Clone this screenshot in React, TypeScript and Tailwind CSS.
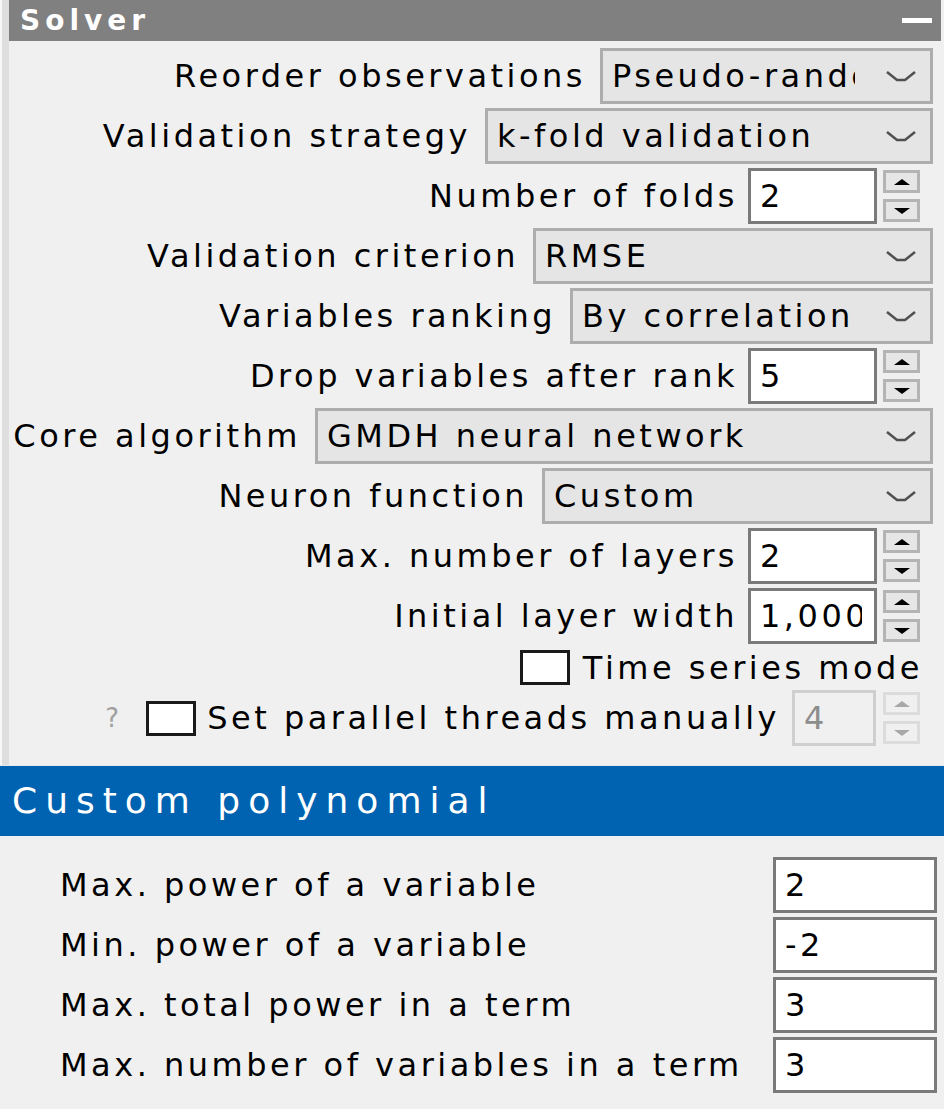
import React from "react";

const Chevron = () => (
  <svg width="30" height="12" viewBox="0 0 30 12">
    <polyline points="1,2 11,10 19,10 29,2" fill="none" stroke="#505050" strokeWidth="2.5" />
  </svg>
);

const Arrow = ({ up, color }: { up: boolean; color: string }) => (
  <svg width="16" height="8" viewBox="0 0 16 8">
    {up ? <polygon points="0,7 8,1 16,7" fill={color} /> : <polygon points="0,1 8,7 16,1" fill={color} />}
  </svg>
);

const Combo = ({ value, w }: { value: string; w: string }) => (
  <div className={`flex h-[56px] items-center border-[3px] border-[#adadad] bg-[#e5e5e5] ${w}`}>
    <span className="flex-1 overflow-hidden whitespace-nowrap pl-[9px]">{value}</span>
    <span className="flex w-[75px] shrink-0 justify-end pr-[14px]">
      <Chevron />
    </span>
  </div>
);

const Spin = ({ disabled }: { disabled?: boolean }) => {
  const box = disabled
    ? "flex h-[23px] w-[37px] items-center justify-center border-[3px] border-[#dcdcdc] bg-[#f0f0f0]"
    : "flex h-[23px] w-[37px] items-center justify-center border-[3px] border-[#b4b4b4] bg-[#e6e6e6]";
  const c = disabled ? "#a8a8a8" : "#000";
  return (
    <div className="flex h-[56px] flex-col justify-between py-[2px]">
      <div className={box}>
        <Arrow up color={c} />
      </div>
      <div className={box}>
        <Arrow up={false} color={c} />
      </div>
    </div>
  );
};

const NumField = ({ value }: { value: string }) => (
  <div className="flex items-center gap-[6px]">
    <div className="flex h-[56px] w-[129px] items-center border-[3px] border-[#7a7a7a] bg-white pl-[9px] pr-[12px]">
      <span className="flex-1 overflow-hidden whitespace-nowrap">{value}</span>
    </div>
    <Spin />
  </div>
);

const PolyRow = ({ label, value }: { label: string; value: string }) => (
  <div className="flex h-[56px] items-center justify-between pl-[60px] pr-[7px]">
    <span>{label}</span>
    <div className="flex h-[56px] w-[164px] items-center border-[3px] border-[#7a7a7a] bg-white pl-[9px]">
      {value}
    </div>
  </div>
);

export default function App() {
  return (
    <div className="h-[1109px] w-[944px] overflow-hidden bg-[#f0f0f0] font-['DejaVu_Sans',sans-serif] text-[32px] leading-none tracking-[3.5px] text-black">
      <div className="flex h-[765px]">
        <div className="w-[9px] shrink-0 border-l-2 border-[#f7f7f7] bg-[#dedede]" />
        <div className="flex flex-1 flex-col">
          <div className="mr-[3px] flex h-[41px] items-center justify-between bg-[#808080] pl-[11px] pr-[9px]">
            <span className="text-[28px] font-bold tracking-[5px] text-white">Solver</span>
            <span className="h-[5px] w-[30px] bg-white" />
          </div>

          <div className="flex flex-col gap-[4px] pt-[7px]">
            <div className="flex h-[56px] items-center justify-end gap-[14px] pr-[11px]">
              <span>Reorder observations</span>
              <Combo value="Pseudo-random" w="w-[333px]" />
            </div>
            <div className="flex h-[56px] items-center justify-end gap-[14px] pr-[11px]">
              <span>Validation strategy</span>
              <Combo value="k-fold validation" w="w-[448px]" />
            </div>
            <div className="flex h-[56px] items-center justify-end gap-[10px] pr-[24px]">
              <span>Number of folds</span>
              <NumField value="2" />
            </div>
            <div className="flex h-[56px] items-center justify-end gap-[14px] pr-[11px]">
              <span>Validation criterion</span>
              <Combo value="RMSE" w="w-[400px]" />
            </div>
            <div className="flex h-[56px] items-center justify-end gap-[14px] pr-[11px]">
              <span>Variables ranking</span>
              <Combo value="By correlation" w="w-[363px]" />
            </div>
            <div className="flex h-[56px] items-center justify-end gap-[10px] pr-[24px]">
              <span>Drop variables after rank</span>
              <NumField value="5" />
            </div>
            <div className="flex h-[56px] items-center justify-end gap-[14px] pr-[11px]">
              <span>Core algorithm</span>
              <Combo value="GMDH neural network" w="w-[618px]" />
            </div>
            <div className="flex h-[56px] items-center justify-end gap-[14px] pr-[11px]">
              <span>Neuron function</span>
              <Combo value="Custom" w="w-[391px]" />
            </div>
            <div className="flex h-[56px] items-center justify-end gap-[10px] pr-[24px]">
              <span>Max. number of layers</span>
              <NumField value="2" />
            </div>
            <div className="flex h-[56px] items-center justify-end gap-[10px] pr-[24px]">
              <span>Initial layer width</span>
              <NumField value="1,000" />
            </div>
          </div>

          <div className="mt-[6px] flex h-[35px] items-center justify-end gap-[13px] pr-[21px]">
            <span className="h-[35px] w-[50px] border-[3px] border-[#1a1a1a] bg-white" />
            <span>Time series mode</span>
          </div>

          <div className="mt-[5px] flex h-[56px] items-center justify-end pr-[24px]">
            <span className="mr-[27px] text-[26px] tracking-normal text-[#a0a0a0]">?</span>
            <span className="mr-[11px] h-[35px] w-[50px] border-[3px] border-[#1a1a1a] bg-white" />
            <span className="mr-[12px]">Set parallel threads manually</span>
            <div className="mr-[7px] flex h-[56px] w-[84px] items-center border-[3px] border-[#cfcfcf] bg-[#f0f0f0] pl-[9px] text-[#8d8d8d]">
              4
            </div>
            <Spin disabled />
          </div>
        </div>
      </div>

      <div className="flex h-[71px] items-center border-t border-[#e8e8e8] bg-[#0063b1] pl-[12px] text-[36px] tracking-[8px] text-white">
        Custom polynomial
      </div>

      <div className="flex flex-col gap-[4px] pt-[21px]">
        <PolyRow label="Max. power of a variable" value="2" />
        <PolyRow label="Min. power of a variable" value="-2" />
        <PolyRow label="Max. total power in a term" value="3" />
        <PolyRow label="Max. number of variables in a term" value="3" />
      </div>
    </div>
  );
}
